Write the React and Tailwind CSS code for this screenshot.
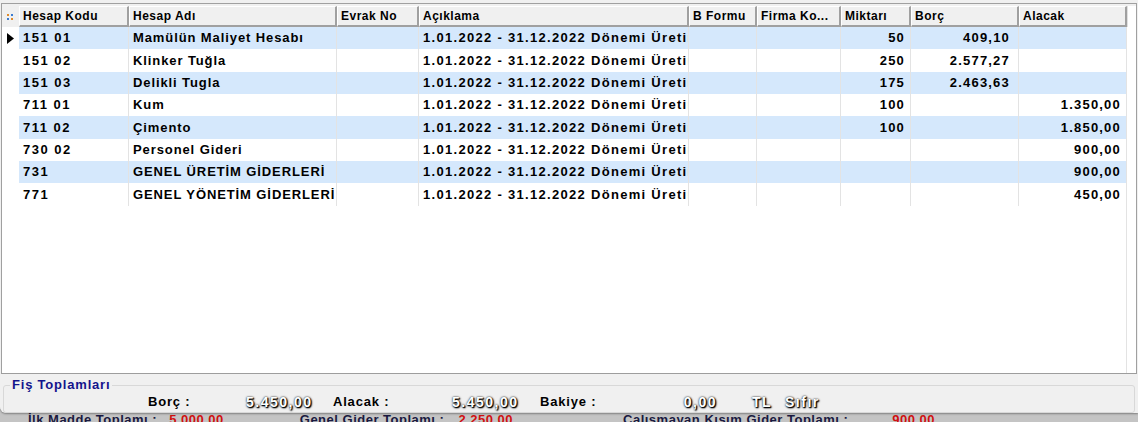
const columns = [
  { key: "kod", title: "Hesap Kodu", w: 110, track: "tracking-[1.5px]" },
  { key: "ad", title: "Hesap Adı", w: 208, track: "tracking-[0.9px]" },
  { key: "evrak", title: "Evrak No", w: 82, track: "" },
  { key: "aciklama", title: "Açıklama", w: 270, track: "tracking-[1.3px]" },
  { key: "bform", title: "B Formu", w: 68, track: "" },
  { key: "firma", title: "Firma Ko...", w: 84, track: "" },
  { key: "miktar", title: "Miktarı", w: 70, right: "pr-[5px]", track: "tracking-[1.2px]" },
  { key: "borc", title: "Borç", w: 108, right: "pr-[8px]", track: "tracking-[1.2px]" },
  { key: "alacak", title: "Alacak", w: 108, right: "pr-[5px]", track: "tracking-[1.2px]" },
];

const donem = "1.01.2022 - 31.12.2022 Dönemi Üretim";

const rows = [
  { kod: "151 01", ad: "Mamülün Maliyet Hesabı", aciklama: donem, miktar: "50", borc: "409,10" },
  { kod: "151 02", ad: "Klinker Tuğla", aciklama: donem, miktar: "250", borc: "2.577,27" },
  { kod: "151 03", ad: "Delikli Tugla", aciklama: donem, miktar: "175", borc: "2.463,63" },
  { kod: "711 01", ad: "Kum", aciklama: donem, miktar: "100", alacak: "1.350,00" },
  { kod: "711 02", ad: "Çimento", aciklama: donem, miktar: "100", alacak: "1.850,00" },
  { kod: "730 02", ad: "Personel Gideri", aciklama: donem, alacak: "900,00" },
  { kod: "731", ad: "GENEL ÜRETİM GİDERLERİ", aciklama: donem, alacak: "900,00" },
  { kod: "771", ad: "GENEL YÖNETİM GİDERLERİ", aciklama: donem, alacak: "450,00" },
];

function HeaderCell({ col }) {
  return (
    <div
      className="h-full shrink-0 flex items-center px-[3px] bg-[#f0f0f0] border-t border-l border-t-white border-l-white border-r-2 border-b-2 border-r-[#a0a0a0] border-b-[#a0a0a0] overflow-hidden whitespace-nowrap text-[12px] tracking-[0.5px]"
      style={{ width: col.w }}
    >
      {col.title}
    </div>
  );
}

function Emboss({ children, className = "" }) {
  return (
    <span className={"text-white text-[14px] tracking-[1.5px] [text-shadow:0_0_2px_#000,1px_1px_1px_#000,1px_1px_2px_#222] " + className}>
      {children}
    </span>
  );
}

export default function App() {
  return (
    <div className="relative w-[1138px] h-[422px] overflow-hidden bg-[#f0f0f0] font-['Liberation_Sans',Arial,sans-serif] font-bold tracking-[0.8px] text-black">
      {/* grid */}
      <div className="h-[371px] mx-[1px] mt-[3px] border border-[#a0a0a0] bg-white flex flex-col">
        <div className="h-[23px] pt-[2px] flex bg-[#f0f0f0]">
          <div className="w-[17px] shrink-0 h-full flex items-center pl-[4px]">
            <svg width="8" height="8" viewBox="0 0 8 8">
              <rect x="1" y="1" width="2" height="2" fill="#e08a2a" />
              <rect x="5" y="1" width="2" height="2" fill="#3b7bd0" />
              <rect x="1" y="5" width="2" height="2" fill="#3b7bd0" />
              <rect x="5" y="5" width="2" height="2" fill="#e08a2a" />
            </svg>
          </div>
          {columns.map((c) => (
            <HeaderCell key={c.key} col={c} />
          ))}
          <div className="flex-1 bg-white border-l border-[#e0e0e0]" />
        </div>

        {rows.map((r, i) => (
          <div key={r.kod} className="h-[22.33px] flex text-[13px]">
            <div className="w-[17px] shrink-0 h-full flex items-center pl-[5px] bg-white">
              {i === 0 && (
                <svg width="7" height="11" viewBox="0 0 7 11">
                  <path d="M0 0 L7 5.5 L0 11 Z" fill="#000" />
                </svg>
              )}
            </div>
            {columns.map((c) => (
              <div
                key={c.key}
                className={
                  "shrink-0 h-full flex items-center pl-[4px] overflow-hidden whitespace-nowrap border-r border-[#e3e3e3] " +
                  c.track + " " +
                  (c.right ? "justify-end " + c.right + " " : "") +
                  (i % 2 === 0 ? "bg-[#d5e8fc]" : "bg-white")
                }
                style={{ width: c.w }}
              >
                {r[c.key] || ""}
              </div>
            ))}
            <div className="flex-1 bg-white" />
          </div>
        ))}
        <div className="flex-1 flex">
          <div className="w-[1125px] border-r border-[#e3e3e3]" />
        </div>
      </div>

      {/* summary panel */}
      <div className="relative z-10 h-[39px] bg-[#f0f0f0] rounded-bl-[6px] shadow-[0_1px_2px_rgba(0,0,0,0.35)] pt-[4px] px-[3px]">
        <fieldset className="h-[35px] border border-[#d8d8d8] rounded-[3px] px-[6px]">
          <legend className="px-[2px] text-[13px] text-[#14148c] leading-[14px]">Fiş Toplamları</legend>
          <div className="flex items-center h-[16px] mt-[2px] text-[13px] whitespace-nowrap">
            <span className="ml-[138px] w-[98px]">Borç :</span>
            <Emboss className="w-[66px] text-right">5.450,00</Emboss>
            <span className="ml-[21px] w-[119px]">Alacak :</span>
            <Emboss className="w-[66px] text-right">5.450,00</Emboss>
            <span className="ml-[22px] w-[111px]">Bakiye :</span>
            <Emboss className="w-[66px] text-right">0,00</Emboss>
            <Emboss className="ml-[35px] w-[33px]">TL</Emboss>
            <Emboss>Sıfır</Emboss>
          </div>
        </fieldset>
      </div>

      {/* totals strip underneath, mostly covered by the panel */}
      <div className="h-[13px] -mt-[4px] bg-[#c4c4c4] overflow-hidden">
        <div className="flex mt-[1px] text-[13px] tracking-[0.5px] whitespace-nowrap">
          <span className="ml-[28px] text-[#1a1a40]">İlk Madde Toplamı :</span>
          <span className="ml-[12px] text-[#d01010]">5.000,00</span>
          <span className="ml-[76px] text-[#1a1a40]">Genel Gider Toplamı :</span>
          <span className="ml-[14px] text-[#d01010]">2.250,00</span>
          <span className="ml-[110px] text-[#1a1a40]">Çalışmayan Kısım Gider Toplamı :</span>
          <span className="ml-[44px] text-[#d01010]">900,00</span>
        </div>
      </div>
    </div>
  );
}
